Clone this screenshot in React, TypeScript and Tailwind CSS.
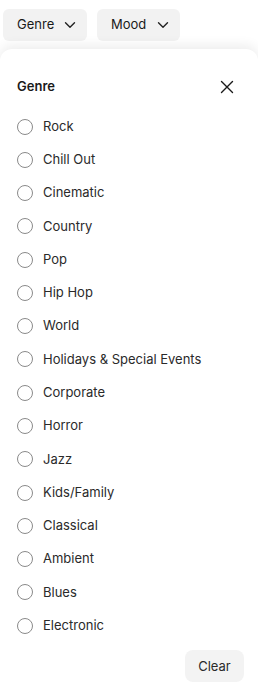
const genres = [
  'Rock',
  'Chill Out',
  'Cinematic',
  'Country',
  'Pop',
  'Hip Hop',
  'World',
  'Holidays & Special Events',
  'Corporate',
  'Horror',
  'Jazz',
  'Kids/Family',
  'Classical',
  'Ambient',
  'Blues',
  'Electronic',
];

function Chevron() {
  return (
    <svg width="12" height="12" viewBox="0 0 12 12" fill="none" className="text-[#222]">
      <path d="M1.5 3.8 6 8.3l4.5-4.5" stroke="currentColor" strokeWidth="1.4" strokeLinecap="round" strokeLinejoin="round" />
    </svg>
  );
}

function FilterButton({ label, width }: { label: string; width: string }) {
  return (
    <button className={`flex h-8 ${width} items-center justify-between rounded-md bg-[#f2f2f2] pl-[14px] pr-[11px] text-[13px] text-[#1a1a1a]`}>
      <span>{label}</span>
      <Chevron />
    </button>
  );
}

export default function App() {
  return (
    <div className="flex h-[695px] w-[258px] flex-col overflow-hidden bg-white font-['Inter',sans-serif]">
      {/* toolbar */}
      <div className="flex gap-[10px] px-[3px] pt-[9px]">
        <FilterButton label="Genre" width="w-[84px]" />
        <FilterButton label="Mood" width="w-[83px]" />
      </div>

      {/* sheet */}
      <div className="mt-[8px] flex flex-1 flex-col rounded-t-xl bg-white px-[17px] pt-[25px] shadow-[0_-4px_12px_rgba(0,0,0,0.07)]">
        <div className="flex h-[26px] items-center justify-between">
          <h2 className="text-[13px] font-semibold text-[#1a1a1a]">Genre</h2>
          <svg width="14" height="14" viewBox="0 0 14 14" className="mr-[7px] text-[#1a1a1a]">
            <path d="M1.5 1.5l11 11M12.5 1.5l-11 11" stroke="currentColor" strokeWidth="1.4" strokeLinecap="round" />
          </svg>
        </div>

        <ul className="mt-[10px]">
          {genres.map(g => (
            <li key={g} className="flex h-[33.27px] items-center gap-[10px]">
              <span className="h-4 w-4 shrink-0 rounded-full border border-[#8a8a8a]" />
              <span className="text-[13px] text-[#2a2a2a]">{g}</span>
            </li>
          ))}
        </ul>

        <div className="mt-[8px] flex justify-end">
          <button className="-mr-[3px] h-8 w-[59px] rounded-lg bg-[#f3f3f3] text-[13px] text-[#2a2a2a]">
            Clear
          </button>
        </div>
      </div>
    </div>
  );
}
